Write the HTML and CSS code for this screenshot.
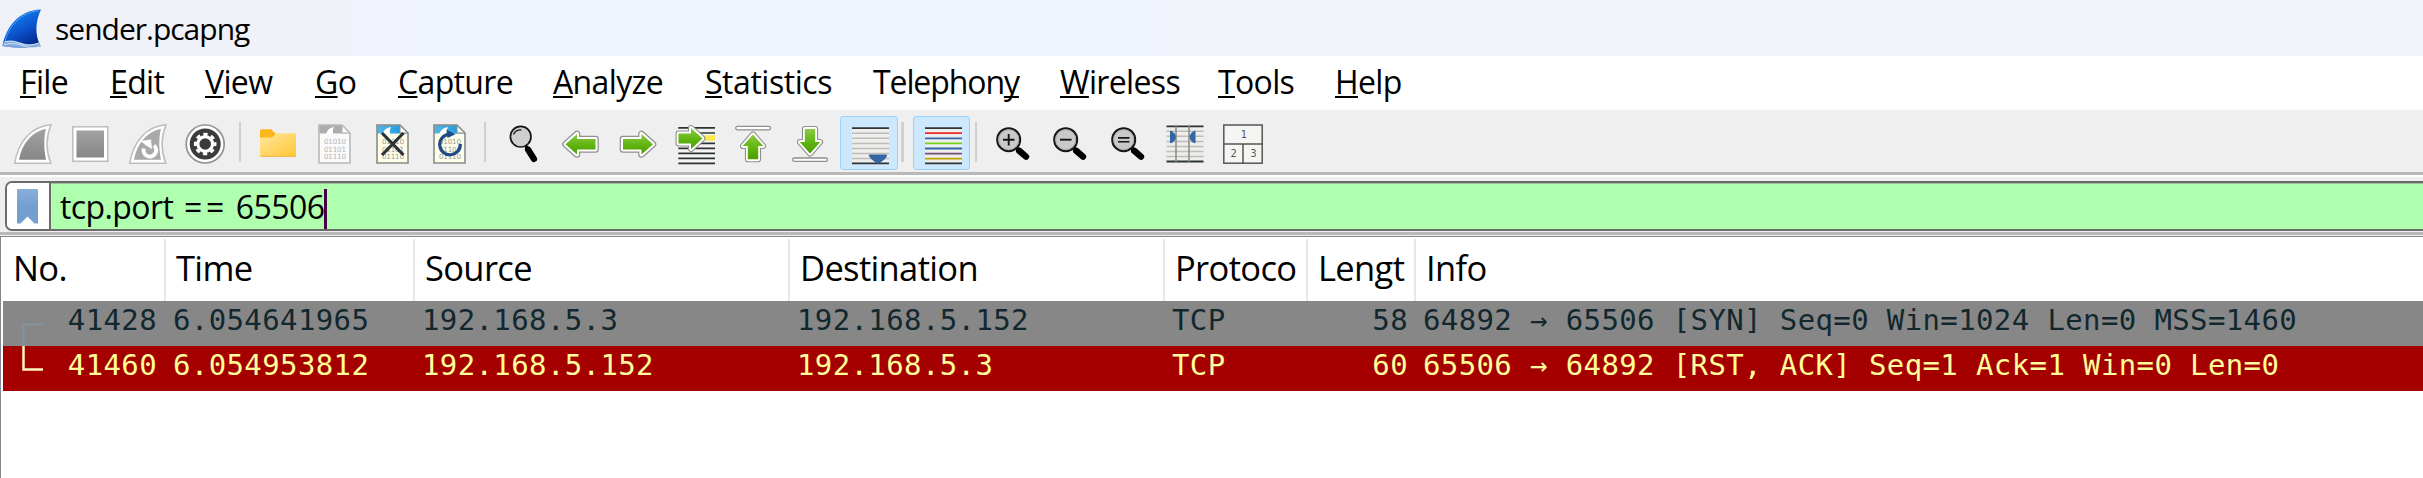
FILE: index.html
```html
<!DOCTYPE html>
<html lang="en">
<head>
<meta charset="utf-8">
<title>sender.pcapng</title>
<link rel="stylesheet" href="styles.css">
</head>
<body>
<svg class="defs" width="0" height="0" aria-hidden="true">
  <defs>
    <linearGradient id="gGreen" x1="0" y1="0" x2="0" y2="1"><stop offset="0" stop-color="#8acb45"/><stop offset=".55" stop-color="#5fb40f"/><stop offset="1" stop-color="#4f9d06"/></linearGradient>
    <linearGradient id="gGray" x1="0" y1="0" x2="0" y2="1"><stop offset="0" stop-color="#a2a2a2"/><stop offset="1" stop-color="#878787"/></linearGradient>
    <linearGradient id="gFolder" x1="0" y1="0" x2="1" y2="1"><stop offset="0" stop-color="#ffe8a0"/><stop offset="1" stop-color="#ffc633"/></linearGradient>
    <linearGradient id="gLogo" x1=".3" y1="0" x2=".8" y2="1"><stop offset="0" stop-color="#1b84f2"/><stop offset=".5" stop-color="#0a56cf"/><stop offset="1" stop-color="#06207f"/></linearGradient>
    <linearGradient id="gSky" x1="0" y1="0" x2="1" y2="0"><stop offset="0" stop-color="#58b5e6"/><stop offset="1" stop-color="#1296dc"/></linearGradient>
    <linearGradient id="gMark" x1="0" y1="0" x2="0" y2="1"><stop offset="0" stop-color="#89afd9"/><stop offset=".5" stop-color="#729fcf"/><stop offset="1" stop-color="#729fcf"/></linearGradient>
    <g id="doc">
      <path d="M1 1H24L32 9V39H1Z"/>
    </g>
    <g id="bits" font-family="DejaVu Sans" font-size="7.2">
      <text x="6" y="20.3" textLength="22">01010</text>
      <text x="6" y="27.8" textLength="22">01101</text>
      <text x="6" y="35.2" textLength="22">01110</text>
    </g>
    <g id="lens">
      <path d="M26.2 26.8L33 32.6" stroke="#000" stroke-width="6.4" stroke-linecap="round"/>
      <path d="M23 23L27 27" stroke="#000" stroke-width="3.4"/>
      <circle cx="15.7" cy="15.7" r="11.5" fill="#c9c9c9" stroke="#151515" stroke-width="2"/>
      <circle cx="15.7" cy="15.7" r="10" fill="none" stroke="#aaa" stroke-width="1"/>
    </g>
    <g id="grayLines" stroke="#bcbdb8" stroke-width="1.5">
      <path d="M0 5.2H37M0 10.3H37M0 15.4H37M0 20.5H37M0 25.6H37M0 30.6H37"/>
    </g>
  </defs>
</svg>

<header class="titlebar">
  <svg class="logo" viewBox="0 0 40 40"><path d="M.5 37C4 17 18 1 39 .5C33 13 33 26 38.500 37.500Q20 40 .5 37Z" fill="url(#gLogo)"/><path d="M2.500 34C6 18 18 4 36.500 1.800" fill="none" stroke="#4aa3f5" stroke-width="1"/><path d="M1.500 33Q9 30 18 33.500T37.500 33.500L38.500 37.500Q20 40.500 .5 37Z" fill="#7fa8dc"/><path d="M3 32.500Q11 31 19 34.500T37 34M2 35.500Q12 33 22 37T38 36.500" fill="none" stroke="#d9e8fa" stroke-width=".9"/></svg>
  <span class="caption">sender.pcapng</span>
</header>

<nav class="menubar">
  <span class="m-file"><u>F</u>ile</span>
  <span class="m-edit"><u>E</u>dit</span>
  <span class="m-view"><u>V</u>iew</span>
  <span class="m-go"><u>G</u>o</span>
  <span class="m-capture"><u>C</u>apture</span>
  <span class="m-analyze"><u>A</u>nalyze</span>
  <span class="m-statistics"><u>S</u>tatistics</span>
  <span class="m-telephony">Telephon<u>y</u></span>
  <span class="m-wireless"><u>W</u>ireless</span>
  <span class="m-tools"><u>T</u>ools</span>
  <span class="m-help"><u>H</u>elp</span>
</nav>

<div class="toolbar">
  <div class="tool"><svg viewBox="0 0 40 40"><path d="M1.700 39.300C5 18 18 2.500 38 .8C33 13 33 27 37.800 39.300Z" fill="#fff" stroke="#bdbdbd" stroke-width="1.500"/><path d="M6 35.800C9 19 19 8 33 4.800C30.500 14 31 26 33 35.800Z" fill="url(#gGray)"/></svg></div>
  <div class="tool"><svg viewBox="0 0 40 40"><rect x="1.800" y="2.800" width="35" height="34.500" fill="#fff" stroke="#bdbdbd" stroke-width="1.500"/><rect x="5.500" y="6.500" width="27.500" height="27" fill="url(#gGray)"/></svg></div>
  <div class="tool"><svg viewBox="0 0 40 40"><path d="M1.700 39.300C5 18 18 2.500 38 .8C33 13 33 27 37.800 39.300Z" fill="#fff" stroke="#bdbdbd" stroke-width="1.500"/><path d="M6 35.800C9 19 19 8 33 4.800C30.500 14 31 26 33 35.800Z" fill="#a9a9a9"/><path d="M26 21.500A6.300 6.300 0 1 1 15.800 24.500" fill="none" stroke="#fff" stroke-width="4"/><path d="M12.500 17L23 15.500L24 25L18 21.500Z" fill="#fff"/></svg></div>
  <div class="tool"><svg viewBox="0 0 40 40"><circle cx="19.200" cy="20" r="19" fill="#fff" stroke="#939393" stroke-width="1.700"/><circle cx="19.200" cy="20" r="15.500" fill="#3b3b3b"/><circle cx="19.200" cy="20" r="9.800" fill="none" stroke="#fff" stroke-width="3" stroke-dasharray="4.200 3.497" stroke-dashoffset="2.100"/><circle cx="19.200" cy="20" r="7.400" fill="none" stroke="#fff" stroke-width="3.200"/></svg></div>
  <div class="sep"></div>
  <div class="tool"><svg viewBox="0 0 40 40"><path d="M2 14V7Q2 5.200 4 5.200H13L17.500 9.200V14Z" fill="#fbb61a"/><path d="M2 14Q2 13.500 3 13.500H14L18.500 9.200H37Q38 9.200 38 10.200V31.500Q38 32.500 37 32.500H3Q2 32.500 2 31.500Z" fill="url(#gFolder)"/><path d="M2.500 32.300H37.500" stroke="#eeb02c" stroke-width=".9"/></svg></div>
  <div class="tool"><svg viewBox="-2 0 40 40"><use href="#doc" fill="#fafafa"/><path d="M1 1H24L31 9.500H1Z" fill="#adadad"/><path d="M8 10Q10 3.500 16 3Q14 6 15 10Z" fill="#fff"/><use href="#bits" fill="#b5b5b5"/><path d="M24 1V9H32Z" fill="#fafafa" stroke="#b4b4b4"/><use href="#doc" fill="none" stroke="#b9b9b9" stroke-width="1.600"/></svg></div>
  <div class="tool"><svg viewBox="-3 0 40 40"><use href="#doc" fill="#fefeea"/><path d="M1 1H24L31 9.500H1Z" fill="url(#gSky)"/><path d="M6 10Q9 3.500 15 3Q13 6 14 10Z" fill="#fff"/><use href="#bits" fill="#9b9b93"/><path d="M24 1V9H32Z" fill="#fff" stroke="#8a8c86"/><use href="#doc" fill="none" stroke="#8a8c86" stroke-width="1.600"/><path d="M6 9L27.500 31M27.500 9L6 31" stroke="#2b3134" stroke-width="3.200"/></svg></div>
  <div class="tool"><svg viewBox="-2 0 40 40"><use href="#doc" fill="#fefeea"/><path d="M1 1H24L31 9.500H1Z" fill="url(#gSky)"/><path d="M6 10Q9 3.500 15 3Q13 6 14 10Z" fill="#fff"/><use href="#bits" fill="#9b9b93"/><path d="M24 1V9H32Z" fill="#fff" stroke="#8a8c86"/><use href="#doc" fill="none" stroke="#8a8c86" stroke-width="1.600"/><path d="M27.300 20A10.300 10.300 0 1 1 15.500 10.300" fill="none" stroke="#204a87" stroke-width="3.200"/><path d="M13.500 5.800L22.500 10.300L14.500 14Z" fill="#204a87"/></svg></div>
  <div class="sep"></div>
  <div class="tool"><svg viewBox="0 0 40 40"><path d="M25 25.500L31 35" stroke="#000" stroke-width="6.200" stroke-linecap="round"/><path d="M22 21L25 25" stroke="#000" stroke-width="3.200"/><circle cx="17.700" cy="12.700" r="10.300" fill="#cfcfcf" stroke="#151515" stroke-width="1.700"/><path d="M10.500 10.500Q12.500 5.500 18.500 5.800" fill="none" stroke="#151515" stroke-width="1.300"/></svg></div>
  <div class="tool"><svg viewBox="0 0 40 40"><g stroke-linejoin="round"><path d="M4.500 20.300L16 10V15H34.500V25.500H16V30.500Z" stroke="#8f908c" stroke-width="6.600"/><path d="M4.500 20.300L16 10V15H34.500V25.500H16V30.500Z" stroke="#fff" stroke-width="4.200"/><path d="M4.500 20.300L16 10V15H34.500V25.500H16V30.500Z" fill="url(#gGreen)"/></g></svg></div>
  <div class="tool"><svg viewBox="0 0 40 40"><g stroke-linejoin="round" transform="translate(39.500 0) scale(-1 1)"><path d="M4.500 20.300L16 10V15H34.500V25.500H16V30.500Z" stroke="#8f908c" stroke-width="6.600"/><path d="M4.500 20.300L16 10V15H34.500V25.500H16V30.500Z" stroke="#fff" stroke-width="4.200"/><path d="M4.500 20.300L16 10V15H34.500V25.500H16V30.500Z" fill="url(#gGreen)"/></g></svg></div>
  <div class="tool"><svg viewBox="0 0 40 40"><path d="M2.300 9H39V39H2.300Z" fill="#f4f4f2"/><path d="M2.300 3.800H39M2.300 9H39M2.300 19.400H39M2.300 24.400H39M2.300 29.400H39M2.300 34.400H39M2.300 39.300H39" stroke="#2e3436" stroke-width="1.700"/><path d="M28 14H39" stroke="#fce94f" stroke-width="5.500"/><g stroke-linejoin="round"><path d="M2.500 9.500H15V4L26.500 14.500L15 25V19.500H2.500Z" stroke="#8f908c" stroke-width="6"/><path d="M2.500 9.500H15V4L26.500 14.500L15 25V19.500H2.500Z" stroke="#fff" stroke-width="3.800"/><path d="M2.500 9.500H15V4L26.500 14.500L15 25V19.500H2.500Z" fill="url(#gGreen)"/></g></svg></div>
  <div class="tool"><svg viewBox="0 0 40 40"><rect x="2.700" y="2.400" width="34.800" height="3.400" rx="1.700" fill="#fff" stroke="#8f908c" stroke-width="1.300"/><g stroke-linejoin="round"><path d="M20 10.500L30 22H25V35.200H15V22H10Z" stroke="#8f908c" stroke-width="6.200"/><path d="M20 10.500L30 22H25V35.200H15V22H10Z" stroke="#fff" stroke-width="4"/><path d="M20 10.500L30.300 22H25.200V35.200H14.800V22H9.700Z" fill="url(#gGreen)"/></g></svg></div>
  <div class="tool"><svg viewBox="0 0 40 40"><rect x="1.700" y="34" width="34.800" height="3.400" rx="1.700" fill="#fff" stroke="#8f908c" stroke-width="1.300"/><g stroke-linejoin="round"><path d="M19 29.500L29 18H24V5H14V18H9Z" stroke="#8f908c" stroke-width="6.200"/><path d="M19 29.500L29 18H24V5H14V18H9Z" stroke="#fff" stroke-width="4"/><path d="M19 29.500L29.300 18H24.200V5H13.800V18H8.700Z" fill="url(#gGreen)"/></g></svg></div>
  <div class="tool on"><svg viewBox="-2 -4 40 40"><rect width="37" height="36" fill="#eeeeec"/><use href="#grayLines"/><path d="M0 .2H37M0 35.300H37" stroke="#2e3436" stroke-width="1.800"/><path d="M17.500 26.500H34Q35.500 26.500 35 28Q33.500 31 28.500 34.500Q26 36.500 23.500 34.500Q18.500 31 16.800 28Q16.500 26.500 17.500 26.500Z" fill="#3465a4"/></svg></div>
  <div class="sep wide"></div>
  <div class="tool on"><svg viewBox="-2 -4 40 40"><rect width="37" height="36" fill="#eeeeec"/><g stroke-width="1.800"><path d="M0 .2H37M0 35.300H37" stroke="#2e3436"/><path d="M0 5.200H37" stroke="#ef2929"/><path d="M0 10.300H37M0 20.500H37" stroke="#3465a4"/><path d="M0 15.400H37" stroke="#73d216"/><path d="M0 25.600H37" stroke="#75507b"/><path d="M0 30.600H37" stroke="#c4a000"/></g></svg></div>
  <div class="sep"></div>
  <div class="tool"><svg viewBox="0 0 40 40"><use href="#lens"/><path d="M10 15.700H21.500M15.700 10V21.500" stroke="#151515" stroke-width="1.900"/></svg></div>
  <div class="tool"><svg viewBox="1 0 40 40"><use href="#lens"/><path d="M10 15.700H21.500" stroke="#151515" stroke-width="1.900"/></svg></div>
  <div class="tool"><svg viewBox="0 0 40 40"><use href="#lens"/><path d="M10 13.900H21.500M10 17.800H21.500" stroke="#151515" stroke-width="1.600"/></svg></div>
  <div class="tool"><svg viewBox="0 -2 40 40"><rect x=".5" width="37" height="36" fill="#eeeeec"/><use href="#grayLines" x=".5"/><path d="M.5 .3H37.500M.5 35.500H37.500" stroke="#2e3436" stroke-width="1.800"/><path d="M10 0V36M23 0V36" stroke="#888a85" stroke-width="1.500"/><path d="M4 5.500Q4 4.500 5.500 5Q9.500 7 10 11Q9.500 15 5.500 17Q4 17.500 4 16.500ZM29.500 5.500Q29.500 4.500 28 5Q24 7 23.500 11Q24 15 28 17Q29.500 17.500 29.500 16.500Z" fill="#3465a4"/></svg></div>
  <div class="tool"><svg viewBox="0 0 40 40"><rect x=".8" y="1" width="38.400" height="38.200" fill="#f5f5f3" stroke="#555753" stroke-width="1.500"/><path d="M0 20H40M20 20V39.500" stroke="#555753" stroke-width="1.500"/><g font-family="DejaVu Sans" font-size="10" fill="#555753" text-anchor="middle"><text x="21" y="14">1</text><text x="10.700" y="33">2</text><text x="30.500" y="33">3</text></g></svg></div>
</div>

<div class="filterbar">
  <div class="filter">
    <div class="bookmark"><svg viewBox="0 0 21 35"><path d="M0 1Q0 0 1 0H20Q21 0 21 1V34.500H17.500L10.500 27.500L3.500 34.500H0Z" fill="url(#gMark)"/></svg></div>
    <div class="expr"><span>tcp.port <span class="op">==</span> 65506</span><i class="caret"></i></div>
  </div>
</div>

<main class="packets">
  <div class="row head">
    <div>No.</div><div>Time</div><div>Source</div><div>Destination</div><div>Protoco</div><div>Lengt</div><div>Info</div>
  </div>
  <div class="row syn">
    <div class="no"><svg class="tree" viewBox="0 0 40 45"><path d="M20.500 45V23.500H40" /></svg><span>41428</span></div><div>6.054641965</div><div>192.168.5.3</div><div>192.168.5.152</div><div>TCP</div><div class="len">58</div><div>64892 → 65506 [SYN] Seq=0 Win=1024 Len=0 MSS=1460</div>
  </div>
  <div class="row rst">
    <div class="no"><svg class="tree" viewBox="0 0 40 45"><path d="M20.500 0V23.500H40" /></svg><span>41460</span></div><div>6.054953812</div><div>192.168.5.152</div><div>192.168.5.3</div><div>TCP</div><div class="len">60</div><div>65506 → 64892 [RST, ACK] Seq=1 Ack=1 Win=0 Len=0</div>
  </div>
</main>
</body>
</html>
```
FILE: styles.css
```css
* { box-sizing: border-box; }
html, body { height: 100%; }
body {
  margin: 0;
  display: flex;
  flex-direction: column;
  overflow: hidden;
  background: #efefef;
  color: #000;
  font-family: "Open Sans", "Noto Sans", sans-serif;
  white-space: nowrap;
}
.defs { flex: none; width: 0; height: 0; }

.titlebar {
  flex: none;
  height: 56px;
  display: flex;
  align-items: flex-start;
  background: linear-gradient(90deg, #f0f1f7 0, #f0f2f9 290px, #eff3fc 420px, #eff3fc 1130px, #f1f3f8 1230px, #f1f3f8 100%);
}
.logo { width: 40px; height: 40px; margin: 9px 0 0 2px; }
.caption { margin-left: 13px; font-size: 30px; line-height: 57px; letter-spacing: -1px; }

.menubar {
  flex: none;
  height: 56px;
  padding-left: 20px;
  display: grid;
  grid-template-columns: 90px 95px 110px 83px 155px 152px 168px 187px 158px 117px 100px;
  background: #fff;
  border-bottom: 2px solid #efefef;
  box-shadow: inset 0 -1px #fff;
  font-size: 32px;
  line-height: 51px;
  letter-spacing: -.65px;
}
.menubar u {
  text-decoration-thickness: 2px;
  text-underline-offset: 2px;
  text-decoration-skip-ink: none;
}
.m-statistics { letter-spacing: -.45px; }
.m-telephony { letter-spacing: -1.1px; }

.toolbar {
  flex: none;
  height: 63px;
  padding-left: 4px;
  display: grid;
  grid-template-columns:
    58px 57px 58px 57px 15px
    58px 57px 58px 57px 15px
    58px 57px 58px 57px 58px 57px 59px 15px
    57px 14px
    58px 57px 58px 57px 58px;
  background: #efefef;
  border-bottom: 3px solid #b9b9b9;
}
.tool { padding: 12px 0 0 9px; }
.tool svg { display: block; width: 40px; height: 40px; fill: none; overflow: visible; }
.tool.on {
  height: 54px;
  margin-top: 4px;
  padding: 7px 0 0 9px;
  background: #cce8ff;
  border: 1px solid #99d1ff;
  border-radius: 3px;
}
.tool.on:has(+ .wide) { margin-left: 1px; }
.sep { width: 2px; height: 40px; margin: 10px 0 0 5px; background: #d0d0d0; }
.sep.wide { width: 3px; margin-left: 3px; }

.filterbar {
  flex: none;
  height: 60px;
  padding: 4px 0 0 5px;
  background: #efefef;
  border-top: 2px solid #fff;
  border-bottom: 3px solid #b9b9b9;
}
.filter {
  height: 50px;
  display: flex;
  overflow: hidden;
  background: #afffaf;
  border: 2px solid #6b6b6b;
  border-right: 0;
  border-radius: 7px 0 0 7px;
}
.bookmark {
  width: 44px;
  padding: 6px 0 0 10px;
  background: #fff;
  border-right: 2px solid #6b6b6b;
}
.bookmark svg { display: block; width: 21px; height: 35px; }
.expr {
  flex: 1;
  display: flex;
  padding-left: 9px;
  font-size: 32px;
  line-height: 45px;
  letter-spacing: -.6px;
  border-top: 1px solid #9fbf9f;
}
.op { padding-left: 3px; letter-spacing: 3.8px; }
.caret { width: 3px; height: 40px; margin: 5px 0 0 0; background: #4a0048; }

.packets {
  flex: 1;
  margin-top: 1px;
  padding: 2px 0 0 2px;
  background: #fff;
  border-left: 1px solid #828790;
  border-top: 1px solid #828790;
}
.row {
  height: 45px;
  display: grid;
  grid-template-columns: 163px 249px 375px 375px 143px 108px 1fr;
  font: 29px/39px "DejaVu Sans Mono", "Liberation Mono", monospace;
  letter-spacing: .38px;
}
.row > div { padding-left: 7px; overflow: hidden; }
.row.head {
  height: 62px;
  font: 34.500px/58px "Open Sans", "Noto Sans", sans-serif;
  letter-spacing: -.65px;
}
.row.head > div { padding-left: 10px; border-right: 2px solid #e8e8e8; }
.row.head > div:last-child { border-right: 0; }
.row .no { display: flex; justify-content: space-between; padding: 0 9px 0 0; }
.row .len { padding-right: 8px; text-align: right; }
.tree { width: 40px; height: 45px; fill: none; stroke-width: 2.500; }
.syn { background: #878787; color: #12272e; }
.syn .tree { stroke: #84929a; }
.rst { background: #a40000; color: #fffc9c; }
.rst .tree { stroke: #fff6c4; }
```
